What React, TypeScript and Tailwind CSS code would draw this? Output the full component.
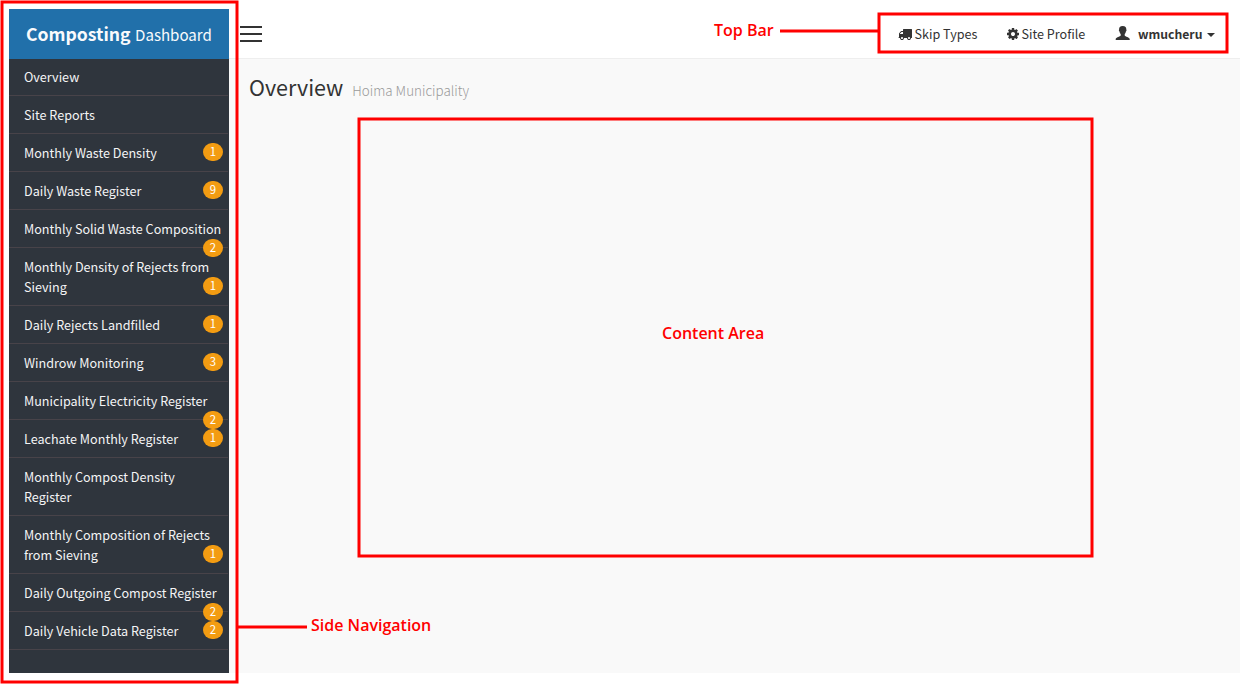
type NavItem = { lines: string[]; badge?: number; low?: boolean };

const items: NavItem[] = [
  { lines: ["Overview"] },
  { lines: ["Site Reports"] },
  { lines: ["Monthly Waste Density"], badge: 1 },
  { lines: ["Daily Waste Register"], badge: 9 },
  { lines: ["Monthly Solid Waste Composition"], badge: 2, low: true },
  { lines: ["Monthly Density of Rejects from", "Sieving"], badge: 1 },
  { lines: ["Daily Rejects Landfilled"], badge: 1 },
  { lines: ["Windrow Monitoring"], badge: 3 },
  { lines: ["Municipality Electricity Register"], badge: 2, low: true },
  { lines: ["Leachate Monthly Register"], badge: 1 },
  { lines: ["Monthly Compost Density", "Register"] },
  { lines: ["Monthly Composition of Rejects", "from Sieving"], badge: 1 },
  { lines: ["Daily Outgoing Compost Register"], badge: 2, low: true },
  { lines: ["Daily Vehicle Data Register"], badge: 2 },
];

function TruckIcon() {
  return (
    <svg className="mr-[3px] h-[14px] w-[14px] shrink-0" viewBox="0 0 1792 1792" fill="currentColor">
      <path d="M640 1408q0-52-38-90t-90-38-90 38-38 90 38 90 90 38 90-38 38-90zm-384-512h384v-256h-158q-13 0-22 9l-195 195q-9 9-9 22v30zm1280 512q0-52-38-90t-90-38-90 38-38 90 38 90 90 38 90-38 38-90zm256-1088v1024q0 15-4 26.500t-13.500 18.500-16.500 11.500-23.500 6-22.500 2-25.500 0-22.500-.5q0 106-75 181t-181 75-181-75-75-181h-384q0 106-75 181t-181 75-181-75-75-181h-64q-3 0-22.500.5t-25.500 0-22.500-2-23.500-6-16.500-11.500-13.500-18.500-4-26.500q0-26 19-45t45-19v-320q0-8-.5-35t0-38 2.500-34.500 6.500-37 14-30.500 22.500-30l198-198q19-19 50.500-32t58.500-13h160v-192q0-26 19-45t45-19h1024q26 0 45 19t19 45z" />
    </svg>
  );
}

function CogIcon() {
  return (
    <svg className="mr-[1.5px] h-[14px] w-[14px] shrink-0" viewBox="0 0 1792 1792" fill="currentColor">
      <path d="M1152 896q0-106-75-181t-181-75-181 75-75 181 75 181 181 75 181-75 75-181zm512-109v222q0 12-8 23t-20 13l-185 28q-19 54-39 91 35 50 107 138 10 12 10 25t-9 23q-27 37-99 108t-94 71q-12 0-26-9l-138-108q-44 23-91 38-16 136-29 186-7 28-36 28h-222q-14 0-24.500-8.500t-11.500-21.500l-28-184q-49-16-90-37l-141 107q-10 9-25 9-14 0-25-11-126-114-165-168-7-10-7-23 0-12 8-23 15-21 51-66.500t54-70.500q-27-50-41-99l-183-27q-13-2-21-12.500t-8-23.500v-222q0-12 8-23t19-13l186-28q14-46 39-92-40-57-107-138-10-12-10-24 0-10 9-23 26-36 98.500-107.500t94.500-71.500q13 0 26 10l138 107q44-23 91-38 16-136 29-186 7-28 36-28h222q14 0 24.500 8.500t11.500 21.500l28 184q49 16 90 37l142-107q9-9 24-9 13 0 25 10 129 119 165 170 7 8 7 22 0 12-8 23-15 21-51 66.500t-54 70.500q26 50 41 98l183 28q13 2 21 12.500t8 23.500z" />
    </svg>
  );
}

function Sidebar() {
  return (
    <aside className="flex w-[220px] shrink-0 flex-col bg-[#2f353d]">
      <div className="flex h-[50px] items-baseline bg-[#2170aa] pl-[17px] whitespace-nowrap text-[#f9fafc]">
        <span className="w-[109px] text-[17.6px] leading-[50px] font-bold">Composting</span>
        <span className="text-[15.1px] leading-[48px]">Dashboard</span>
      </div>
      <nav className="w-[219px]">
        {items.map((item, i) => (
          <div
            key={item.lines[0]}
            className={
              "relative border-b border-[#484349] pb-2 pl-[15px] text-[12.6px] leading-5 whitespace-nowrap text-[#f4f4f5] " +
              (i === 0 ? "pt-2" : "pt-[9px]")
            }
          >
            {item.lines.map((l) => (
              <div key={l}>{l}</div>
            ))}
            {item.badge !== undefined && (
              <span
                className={
                  "absolute right-[5px] z-10 h-[18px] w-5 rounded-[10px] bg-[#f39c12] text-center text-[11.4px] leading-[16px] text-white " +
                  (item.low ? "-bottom-[10px]" : "bottom-[10px]")
                }
              >
                {item.badge}
              </span>
            )}
          </div>
        ))}
      </nav>
    </aside>
  );
}

function TopBar() {
  return (
    <header className="flex h-[50px] items-center border-b border-[#eeeeee] bg-white pl-[11px] text-[12.6px] text-[#333333]">
      <div className="flex w-[22px] flex-col gap-[5px]">
        <span className="h-[2px] bg-[#333333]" />
        <span className="h-[2px] bg-[#333333]" />
        <span className="h-[2px] bg-[#333333]" />
      </div>
      <div className="ml-auto flex items-center pr-[25px] leading-5 whitespace-nowrap">
        <div className="flex w-[108.5px] items-center">
          <TruckIcon />
          <span>Skip Types</span>
        </div>
        <div className="flex w-[109px] items-center">
          <CogIcon />
          <span>Site Profile</span>
        </div>
        <div className="flex w-[100px] items-center">
          <svg className="mr-2 mb-[2px] h-[14px] w-[15px] shrink-0" viewBox="0 0 15 14" fill="currentColor">
            <path d="M7.700 0C5 0 4 1.300 4.100 3.600c-.4.3-.3 1.600.4 2 .2 1.200.6 1.800 1.200 2.300v1.500C5.200 10.700.7 11 .7 13v1h14v-1c0-2-4.500-2.300-5-3.600V7.900c.6-.5 1-1.100 1.200-2.300.7-.4.8-1.700.4-2C11.400 1.300 10.400 0 7.700 0Z" />
          </svg>
          <span className="text-[12.2px] font-bold">wmucheru</span>
          <span className="mt-[3px] ml-auto h-0 w-0 border-x-4 border-t-4 border-x-transparent border-t-[#333333]" />
        </div>
      </div>
    </header>
  );
}

function Annotations() {
  return (
    <div className="pointer-events-none absolute inset-0 z-20 font-['Open_Sans',sans-serif] text-[16px] leading-5 font-semibold whitespace-nowrap text-[#ff0000]">
      <svg className="absolute inset-0" width="1240" height="684" fill="none" stroke="#ff0000" strokeWidth="3">
        <rect x="2" y="2" width="235" height="680" />
        <rect x="879" y="14" width="348" height="38" />
        <rect x="359" y="119" width="733" height="437" />
        <path d="M780 31H879M237 627H307" />
      </svg>
      <span className="absolute top-5 left-[714px]">Top Bar</span>
      <span className="absolute top-[323px] left-[662px]">Content Area</span>
      <span className="absolute top-[615px] left-[311px]">Side Navigation</span>
    </div>
  );
}

export default function App() {
  return (
    <div className="relative h-[684px] w-[1240px] overflow-hidden bg-white pt-[9px] pb-[11px] pl-[9px] font-['Noto_Sans_CJK_SC',sans-serif]">
      <div className="flex h-[664px]">
        <Sidebar />
        <div className="flex flex-1 flex-col bg-[#f9f9f9]">
          <TopBar />
          <main className="flex items-baseline pt-[13px] pl-5">
            <h1 className="text-[21.500px] leading-[30px] text-[#333333]">Overview</h1>
            <small className="ml-[9px] text-[13.400px] leading-[30px] font-light text-[#999999]">Hoima Municipality</small>
          </main>
        </div>
      </div>
      <Annotations />
    </div>
  );
}
